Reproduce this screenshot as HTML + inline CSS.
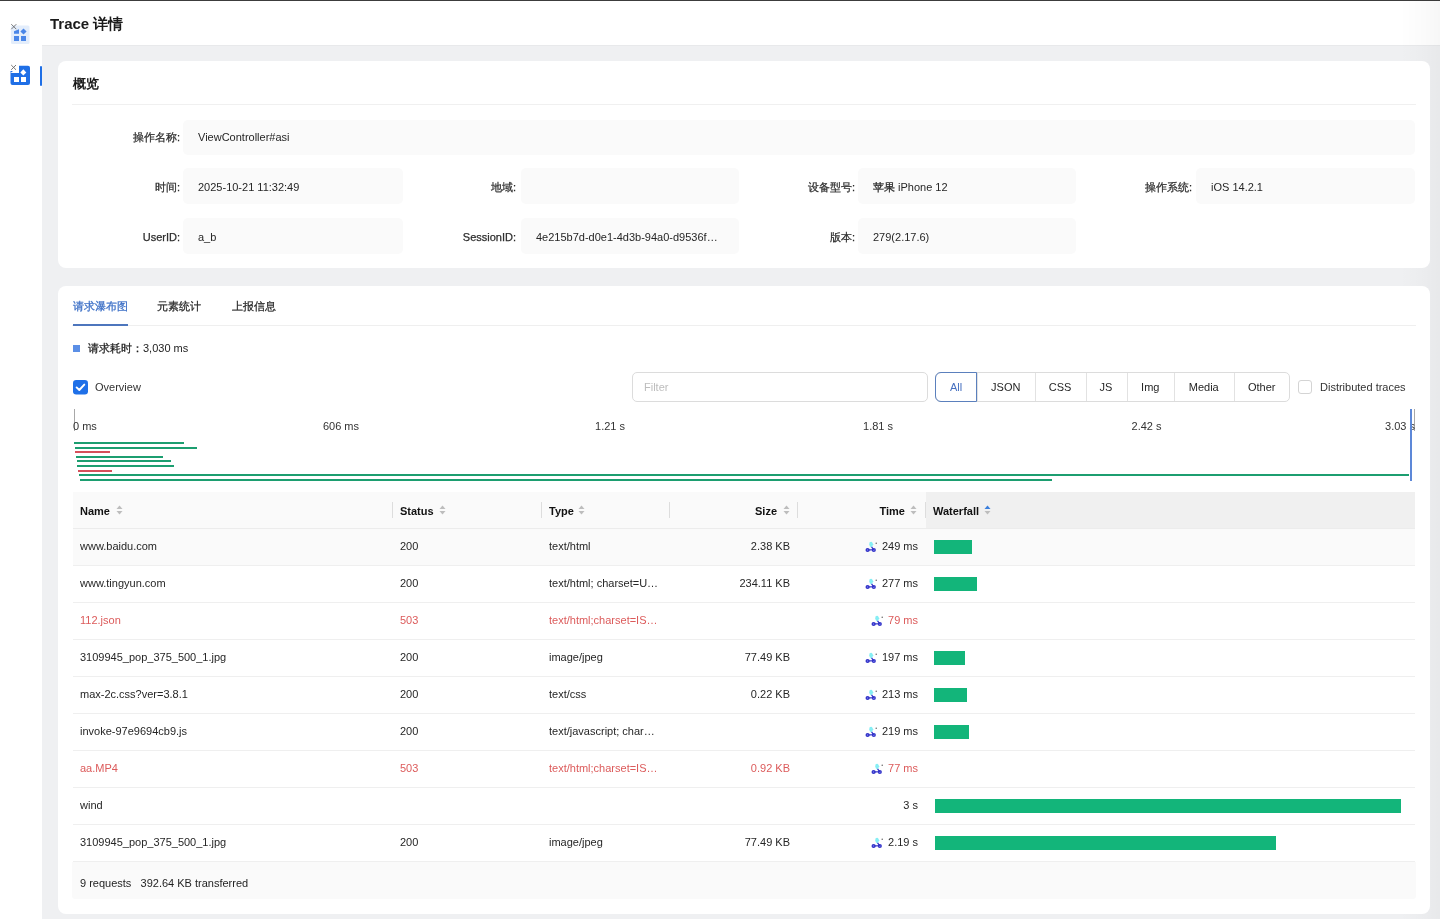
<!DOCTYPE html><html><head><meta charset="utf-8"><style>
*{box-sizing:border-box;margin:0;padding:0}
html,body{width:1440px;height:919px;overflow:hidden;background:#fff;font-family:"Liberation Sans",sans-serif;color:#262626;font-size:11px}
.a{position:absolute}
.t{position:absolute;white-space:nowrap;line-height:14px}
.card{position:absolute;background:#fff;border-radius:8px}
.lbl{position:absolute;white-space:nowrap;color:#2e2e2e;-webkit-text-stroke:0.25px #2e2e2e;text-align:right;line-height:14px}
.fb{position:absolute;background:#fafafa;border-radius:5px}
.val{position:absolute;white-space:nowrap;color:#262626;line-height:14px}
.seg{position:absolute;top:372px;height:30px;border-top:1px solid #dcdcdc;border-bottom:1px solid #dcdcdc;line-height:27px;text-align:center;color:#262626}
.hd{position:absolute;white-space:nowrap;font-weight:bold;color:#111;line-height:14px}
.sep{position:absolute;top:502px;width:1px;height:16px;background:#dddddd}
.rl{position:absolute;left:73px;width:1342px;height:1px;background:#efefef}
.cell{position:absolute;white-space:nowrap;line-height:14px;color:#262626}
.red{color:#dc5b5b}
.cj{-webkit-text-stroke:0.25px currentColor}
.wf{position:absolute;height:14px;background:#13b57a}
.ob{position:absolute;height:2px;background:#1c9e70}
.obr{position:absolute;height:2px;background:#d6505a}
</style></head><body><div style="position:absolute;left:0;top:0;width:1440px;height:919px;will-change:transform">
<div class="a" style="left:0;top:0;width:1440px;height:1px;background:#3c3c3c"></div>
<div class="a" style="left:42px;top:45px;width:1398px;height:874px;background:#eff0f2;border-top:1px solid #e8e9eb"></div>
<div class="t" style="left:50px;top:15px;font-size:15px;font-weight:bold;color:#1b1b1b;line-height:18px">Trace 详情</div>
<svg class="a" style="left:8px;top:20px" width="26" height="28" viewBox="0 0 26 28">
<rect x="3" y="5.5" width="18.5" height="18.5" rx="1.5" fill="#e3edfb"/>
<path d="M6 11.3 L11 9.2 L11 13.8 L6 13.8 Z" fill="#4a86e8"/>
<rect x="6" y="16" width="5" height="5" fill="#4a86e8"/>
<rect x="13" y="16" width="5" height="5" fill="#4a86e8"/>
<path d="M15.5 8.6 L18.6 11.6 L15.5 14.6 L12.4 11.6 Z" fill="#4a86e8"/>
<path d="M3.3 4.2 L8.3 9.2 M8.3 4.2 L3.3 9.2" stroke="#6a6a6a" stroke-width="0.9"/>
</svg>
<svg class="a" style="left:8px;top:60px" width="26" height="28" viewBox="0 0 26 28">
<path d="M11 5.8 H20 Q22 5.8 22 7.8 V23 Q22 25 20 25 H4.5 Q2.5 25 2.5 23 V13 H11 Z" fill="#1f6fe6"/>
<path d="M2.5 13 L2.5 11 L5 11 Z" fill="#1f6fe6"/>
<rect x="6" y="17" width="5" height="5" fill="#fff"/>
<rect x="13" y="17" width="5" height="5" fill="#fff"/>
<path d="M15.3 9.2 L18.3 12.4 L15.3 15.6 L12.3 12.4 Z" fill="#fff"/>
<path d="M3.2 5 L8 9.8 M8 5 L3.2 9.8" stroke="#6a6a6a" stroke-width="0.9"/>
</svg>
<div class="a" style="left:40px;top:66px;width:2px;height:20px;background:#1f6fe6;border-radius:1px"></div>
<div class="a" style="left:1400px;top:0;width:40px;height:919px;background:linear-gradient(to right,rgba(0,0,0,0),rgba(0,0,0,0.015) 60%,rgba(0,0,0,0.03))"></div>
<div class="card" style="left:58px;top:61px;width:1372px;height:207px"></div>
<div class="t" style="left:73px;top:76px;font-size:13px;font-weight:bold;color:#1a1a1a;line-height:16px">概览</div>
<div class="a" style="left:72px;top:104px;width:1344px;height:1px;background:#f0f0f0"></div>
<div class="lbl" style="right:1260px;top:130px">操作名称:</div>
<div class="fb" style="left:183px;top:120px;width:1232px;height:35px"></div>
<div class="val" style="left:198px;top:130px">ViewController#asi</div>
<div class="lbl" style="right:1260px;top:180px">时间:</div>
<div class="fb" style="left:183px;top:168px;width:220px;height:36px"></div>
<div class="val" style="left:198px;top:180px">2025-10-21 11:32:49</div>
<div class="lbl" style="right:924px;top:180px">地域:</div>
<div class="fb" style="left:521px;top:168px;width:218px;height:36px"></div>
<div class="lbl" style="right:585px;top:180px">设备型号:</div>
<div class="fb" style="left:858px;top:168px;width:218px;height:36px"></div>
<div class="val" style="left:873px;top:180px"><span class="cj">苹果</span> iPhone 12</div>
<div class="lbl" style="right:248px;top:180px">操作系统:</div>
<div class="fb" style="left:1196px;top:168px;width:219px;height:36px"></div>
<div class="val" style="left:1211px;top:180px">iOS 14.2.1</div>
<div class="lbl" style="right:1260px;top:230px">UserID:</div>
<div class="fb" style="left:183px;top:218px;width:220px;height:36px"></div>
<div class="val" style="left:198px;top:230px">a_b</div>
<div class="lbl" style="right:924px;top:230px">SessionID:</div>
<div class="fb" style="left:521px;top:218px;width:218px;height:36px"></div>
<div class="val" style="left:536px;top:230px">4e215b7d-d0e1-4d3b-94a0-d9536f…</div>
<div class="lbl" style="right:585px;top:230px">版本:</div>
<div class="fb" style="left:858px;top:218px;width:218px;height:36px"></div>
<div class="val" style="left:873px;top:230px">279(2.17.6)</div>
<div class="card" style="left:58px;top:286px;width:1372px;height:628px"></div>
<div class="t" style="left:73px;top:299px;color:#3a6ec6"><span class="cj">请求瀑布图</span></div>
<div class="t" style="left:157px;top:299px;color:#262626"><span class="cj">元素统计</span></div>
<div class="t" style="left:232px;top:299px;color:#262626"><span class="cj">上报信息</span></div>
<div class="a" style="left:72px;top:325px;width:1344px;height:1px;background:#efefef"></div>
<div class="a" style="left:73px;top:324px;width:55px;height:2px;background:#4d76bd"></div>
<div class="a" style="left:73px;top:345px;width:7px;height:7px;background:#5b8fe6"></div>
<div class="t" style="left:88px;top:341px;color:#222"><span class="cj">请求耗时：</span>3,030 ms</div>
<svg class="a" style="left:73px;top:380px" width="15" height="14.5" viewBox="0 0 15 14.5"><rect width="15" height="14.5" rx="3.2" fill="#1f70e8"/><path d="M3.6 7.4 L6.3 10 L11.3 4.6" stroke="#fff" stroke-width="1.9" fill="none" stroke-linecap="round" stroke-linejoin="round"/></svg>
<div class="t" style="left:95px;top:380px;color:#333">Overview</div>
<div class="a" style="left:632px;top:372px;width:296px;height:30px;border:1px solid #dcdcdc;border-radius:5px;background:#fff"></div>
<div class="t" style="left:644px;top:380px;color:#bdbdbd">Filter</div>
<div class="a" style="left:935px;top:372px;width:355px;height:30px;border:1px solid #dcdcdc;border-radius:5px"></div>
<div class="t" style="left:935px;top:380px;width:42px;text-align:center;color:#4670c0">All</div>
<div class="a" style="left:977px;top:373px;width:1px;height:28px;background:#e2e2e2"></div>
<div class="t" style="left:977px;top:380px;width:57.5px;text-align:center;color:#262626">JSON</div>
<div class="a" style="left:1034.5px;top:373px;width:1px;height:28px;background:#e2e2e2"></div>
<div class="t" style="left:1034.5px;top:380px;width:51.0px;text-align:center;color:#262626">CSS</div>
<div class="a" style="left:1085.5px;top:373px;width:1px;height:28px;background:#e2e2e2"></div>
<div class="t" style="left:1085.5px;top:380px;width:41.0px;text-align:center;color:#262626">JS</div>
<div class="a" style="left:1126.5px;top:373px;width:1px;height:28px;background:#e2e2e2"></div>
<div class="t" style="left:1126.5px;top:380px;width:47.5px;text-align:center;color:#262626">Img</div>
<div class="a" style="left:1174px;top:373px;width:1px;height:28px;background:#e2e2e2"></div>
<div class="t" style="left:1174px;top:380px;width:59.5px;text-align:center;color:#262626">Media</div>
<div class="a" style="left:1233.5px;top:373px;width:1px;height:28px;background:#e2e2e2"></div>
<div class="t" style="left:1233.5px;top:380px;width:56.5px;text-align:center;color:#262626">Other</div>
<div class="a" style="left:935px;top:372px;width:42px;height:30px;border:1px solid #5b80bd;border-radius:6px 0 0 6px"></div>
<div class="a" style="left:1298px;top:380px;width:14px;height:14px;border:1px solid #d4d4d4;border-radius:3px;background:#fff"></div>
<div class="t" style="left:1320px;top:380px;color:#333">Distributed traces</div>
<div class="a" style="left:74px;top:409px;width:1px;height:22px;background:#a8a8a8"></div>
<div class="a" style="left:1414px;top:409px;width:1px;height:22px;background:#a8a8a8"></div>
<div class="t" style="left:73px;top:419px;color:#333">0 ms</div>
<div class="t" style="left:291px;width:100px;text-align:center;top:419px;color:#333">606 ms</div>
<div class="t" style="left:560px;width:100px;text-align:center;top:419px;color:#333">1.21 s</div>
<div class="t" style="left:828px;width:100px;text-align:center;top:419px;color:#333">1.81 s</div>
<div class="t" style="left:1096.5px;width:100px;text-align:center;top:419px;color:#333">2.42 s</div>
<div class="t" style="right:25px;top:419px;color:#333">3.03 s</div>
<div class="ob" style="left:74px;top:442.00px;width:110px"></div>
<div class="ob" style="left:74.5px;top:446.62px;width:122.5px"></div>
<div class="obr" style="left:75px;top:451.24px;width:35px"></div>
<div class="ob" style="left:76px;top:455.86px;width:87px"></div>
<div class="ob" style="left:76.5px;top:460.48px;width:94.5px"></div>
<div class="ob" style="left:77px;top:465.10px;width:97px"></div>
<div class="obr" style="left:78px;top:469.72px;width:34px"></div>
<div class="ob" style="left:78.5px;top:474.34px;width:1330.5px"></div>
<div class="ob" style="left:79.5px;top:478.96px;width:972.5px"></div>
<div class="a" style="left:1410px;top:409px;width:2px;height:72px;background:#5d88d8"></div>
<div class="a" style="left:73px;top:492px;width:1342px;height:36px;background:#fafafa"></div>
<div class="a" style="left:926px;top:492px;width:489px;height:36px;background:#f0f0f0"></div>
<div class="sep" style="left:392px"></div>
<div class="sep" style="left:541px"></div>
<div class="sep" style="left:669px"></div>
<div class="sep" style="left:797px"></div>
<div class="sep" style="left:925px"></div>
<div class="hd" style="left:80px;top:504px">Name</div>
<svg class="a" style="left:115.5px;top:504px" width="7" height="12" viewBox="0 0 7 12"><path d="M0.5 5 L3.5 1.5 L6.5 5 Z" fill="#bdbdbd"/><path d="M0.5 7 L3.5 10.5 L6.5 7 Z" fill="#bdbdbd"/></svg>
<div class="hd" style="left:400px;top:504px">Status</div>
<svg class="a" style="left:438.5px;top:504px" width="7" height="12" viewBox="0 0 7 12"><path d="M0.5 5 L3.5 1.5 L6.5 5 Z" fill="#bdbdbd"/><path d="M0.5 7 L3.5 10.5 L6.5 7 Z" fill="#bdbdbd"/></svg>
<div class="hd" style="left:549px;top:504px">Type</div>
<svg class="a" style="left:578px;top:504px" width="7" height="12" viewBox="0 0 7 12"><path d="M0.5 5 L3.5 1.5 L6.5 5 Z" fill="#bdbdbd"/><path d="M0.5 7 L3.5 10.5 L6.5 7 Z" fill="#bdbdbd"/></svg>
<div class="hd" style="right:663px;top:504px">Size</div>
<svg class="a" style="left:782.5px;top:504px" width="7" height="12" viewBox="0 0 7 12"><path d="M0.5 5 L3.5 1.5 L6.5 5 Z" fill="#bdbdbd"/><path d="M0.5 7 L3.5 10.5 L6.5 7 Z" fill="#bdbdbd"/></svg>
<div class="hd" style="right:535px;top:504px">Time</div>
<svg class="a" style="left:910px;top:504px" width="7" height="12" viewBox="0 0 7 12"><path d="M0.5 5 L3.5 1.5 L6.5 5 Z" fill="#bdbdbd"/><path d="M0.5 7 L3.5 10.5 L6.5 7 Z" fill="#bdbdbd"/></svg>
<div class="hd" style="left:933px;top:504px">Waterfall</div>
<svg class="a" style="left:984px;top:504px" width="7" height="12" viewBox="0 0 7 12"><path d="M0.5 5 L3.5 1.5 L6.5 5 Z" fill="#3b7fdc"/><path d="M0.5 7 L3.5 10.5 L6.5 7 Z" fill="#bdbdbd"/></svg>
<div class="a" style="left:73px;top:528px;width:1342px;height:1px;background:#ececec"></div>
<div class="a" style="left:73px;top:529px;width:1342px;height:36px;background:#fafafa"></div>
<div class="rl" style="top:565px"></div>
<div class="cell" style="left:80px;top:539px">www.baidu.com</div>
<div class="cell" style="left:400px;top:539px">200</div>
<div class="cell" style="left:549px;top:539px">text/html</div>
<div class="cell" style="right:650px;top:539px">2.38 KB</div>
<div class="cell" style="right:522px;top:539px"><span style="display:inline-block;vertical-align:-3px;margin-right:4px;width:13px;height:12px"><svg width="13" height="12" viewBox="0 0 13 12"><path d="M4.6 1.2 Q5.8 0.4 7 1 L8.2 3.2 Q7.6 5.6 6 6.4 Q4.6 5.2 4.2 3.4 Z" fill="#86eef4"/><circle cx="2.6" cy="9" r="2.1" fill="#3434c8"/><circle cx="8.8" cy="9" r="2.1" fill="#3434c8"/><circle cx="2.6" cy="9" r="0.7" fill="#9aa0ff"/><circle cx="8.8" cy="9" r="0.7" fill="#9aa0ff"/><path d="M2.6 9 L7.6 8.6 M8.8 9 L6.6 5.8" stroke="#3434c8" stroke-width="1.3" fill="none"/><circle cx="11.2" cy="2.2" r="0.7" fill="#555"/></svg></span>249 ms</div>
<div class="wf" style="left:933.5px;top:540px;width:38.5px"></div>
<div class="rl" style="top:602px"></div>
<div class="cell" style="left:80px;top:576px">www.tingyun.com</div>
<div class="cell" style="left:400px;top:576px">200</div>
<div class="cell" style="left:549px;top:576px">text/html; charset=U…</div>
<div class="cell" style="right:650px;top:576px">234.11 KB</div>
<div class="cell" style="right:522px;top:576px"><span style="display:inline-block;vertical-align:-3px;margin-right:4px;width:13px;height:12px"><svg width="13" height="12" viewBox="0 0 13 12"><path d="M4.6 1.2 Q5.8 0.4 7 1 L8.2 3.2 Q7.6 5.6 6 6.4 Q4.6 5.2 4.2 3.4 Z" fill="#86eef4"/><circle cx="2.6" cy="9" r="2.1" fill="#3434c8"/><circle cx="8.8" cy="9" r="2.1" fill="#3434c8"/><circle cx="2.6" cy="9" r="0.7" fill="#9aa0ff"/><circle cx="8.8" cy="9" r="0.7" fill="#9aa0ff"/><path d="M2.6 9 L7.6 8.6 M8.8 9 L6.6 5.8" stroke="#3434c8" stroke-width="1.3" fill="none"/><circle cx="11.2" cy="2.2" r="0.7" fill="#555"/></svg></span>277 ms</div>
<div class="wf" style="left:933.5px;top:577px;width:43.0px"></div>
<div class="rl" style="top:639px"></div>
<div class="cell red" style="left:80px;top:613px">112.json</div>
<div class="cell red" style="left:400px;top:613px">503</div>
<div class="cell red" style="left:549px;top:613px">text/html;charset=IS…</div>
<div class="cell red" style="right:522px;top:613px"><span style="display:inline-block;vertical-align:-3px;margin-right:4px;width:13px;height:12px"><svg width="13" height="12" viewBox="0 0 13 12"><path d="M4.6 1.2 Q5.8 0.4 7 1 L8.2 3.2 Q7.6 5.6 6 6.4 Q4.6 5.2 4.2 3.4 Z" fill="#86eef4"/><circle cx="2.6" cy="9" r="2.1" fill="#3434c8"/><circle cx="8.8" cy="9" r="2.1" fill="#3434c8"/><circle cx="2.6" cy="9" r="0.7" fill="#9aa0ff"/><circle cx="8.8" cy="9" r="0.7" fill="#9aa0ff"/><path d="M2.6 9 L7.6 8.6 M8.8 9 L6.6 5.8" stroke="#3434c8" stroke-width="1.3" fill="none"/><circle cx="11.2" cy="2.2" r="0.7" fill="#555"/></svg></span>79 ms</div>
<div class="rl" style="top:676px"></div>
<div class="cell" style="left:80px;top:650px">3109945_pop_375_500_1.jpg</div>
<div class="cell" style="left:400px;top:650px">200</div>
<div class="cell" style="left:549px;top:650px">image/jpeg</div>
<div class="cell" style="right:650px;top:650px">77.49 KB</div>
<div class="cell" style="right:522px;top:650px"><span style="display:inline-block;vertical-align:-3px;margin-right:4px;width:13px;height:12px"><svg width="13" height="12" viewBox="0 0 13 12"><path d="M4.6 1.2 Q5.8 0.4 7 1 L8.2 3.2 Q7.6 5.6 6 6.4 Q4.6 5.2 4.2 3.4 Z" fill="#86eef4"/><circle cx="2.6" cy="9" r="2.1" fill="#3434c8"/><circle cx="8.8" cy="9" r="2.1" fill="#3434c8"/><circle cx="2.6" cy="9" r="0.7" fill="#9aa0ff"/><circle cx="8.8" cy="9" r="0.7" fill="#9aa0ff"/><path d="M2.6 9 L7.6 8.6 M8.8 9 L6.6 5.8" stroke="#3434c8" stroke-width="1.3" fill="none"/><circle cx="11.2" cy="2.2" r="0.7" fill="#555"/></svg></span>197 ms</div>
<div class="wf" style="left:934px;top:651px;width:30.5px"></div>
<div class="rl" style="top:713px"></div>
<div class="cell" style="left:80px;top:687px">max-2c.css?ver=3.8.1</div>
<div class="cell" style="left:400px;top:687px">200</div>
<div class="cell" style="left:549px;top:687px">text/css</div>
<div class="cell" style="right:650px;top:687px">0.22 KB</div>
<div class="cell" style="right:522px;top:687px"><span style="display:inline-block;vertical-align:-3px;margin-right:4px;width:13px;height:12px"><svg width="13" height="12" viewBox="0 0 13 12"><path d="M4.6 1.2 Q5.8 0.4 7 1 L8.2 3.2 Q7.6 5.6 6 6.4 Q4.6 5.2 4.2 3.4 Z" fill="#86eef4"/><circle cx="2.6" cy="9" r="2.1" fill="#3434c8"/><circle cx="8.8" cy="9" r="2.1" fill="#3434c8"/><circle cx="2.6" cy="9" r="0.7" fill="#9aa0ff"/><circle cx="8.8" cy="9" r="0.7" fill="#9aa0ff"/><path d="M2.6 9 L7.6 8.6 M8.8 9 L6.6 5.8" stroke="#3434c8" stroke-width="1.3" fill="none"/><circle cx="11.2" cy="2.2" r="0.7" fill="#555"/></svg></span>213 ms</div>
<div class="wf" style="left:934px;top:688px;width:33px"></div>
<div class="rl" style="top:750px"></div>
<div class="cell" style="left:80px;top:724px">invoke-97e9694cb9.js</div>
<div class="cell" style="left:400px;top:724px">200</div>
<div class="cell" style="left:549px;top:724px">text/javascript; char…</div>
<div class="cell" style="right:522px;top:724px"><span style="display:inline-block;vertical-align:-3px;margin-right:4px;width:13px;height:12px"><svg width="13" height="12" viewBox="0 0 13 12"><path d="M4.6 1.2 Q5.8 0.4 7 1 L8.2 3.2 Q7.6 5.6 6 6.4 Q4.6 5.2 4.2 3.4 Z" fill="#86eef4"/><circle cx="2.6" cy="9" r="2.1" fill="#3434c8"/><circle cx="8.8" cy="9" r="2.1" fill="#3434c8"/><circle cx="2.6" cy="9" r="0.7" fill="#9aa0ff"/><circle cx="8.8" cy="9" r="0.7" fill="#9aa0ff"/><path d="M2.6 9 L7.6 8.6 M8.8 9 L6.6 5.8" stroke="#3434c8" stroke-width="1.3" fill="none"/><circle cx="11.2" cy="2.2" r="0.7" fill="#555"/></svg></span>219 ms</div>
<div class="wf" style="left:934px;top:725px;width:34.5px"></div>
<div class="rl" style="top:787px"></div>
<div class="cell red" style="left:80px;top:761px">aa.MP4</div>
<div class="cell red" style="left:400px;top:761px">503</div>
<div class="cell red" style="left:549px;top:761px">text/html;charset=IS…</div>
<div class="cell red" style="right:650px;top:761px">0.92 KB</div>
<div class="cell red" style="right:522px;top:761px"><span style="display:inline-block;vertical-align:-3px;margin-right:4px;width:13px;height:12px"><svg width="13" height="12" viewBox="0 0 13 12"><path d="M4.6 1.2 Q5.8 0.4 7 1 L8.2 3.2 Q7.6 5.6 6 6.4 Q4.6 5.2 4.2 3.4 Z" fill="#86eef4"/><circle cx="2.6" cy="9" r="2.1" fill="#3434c8"/><circle cx="8.8" cy="9" r="2.1" fill="#3434c8"/><circle cx="2.6" cy="9" r="0.7" fill="#9aa0ff"/><circle cx="8.8" cy="9" r="0.7" fill="#9aa0ff"/><path d="M2.6 9 L7.6 8.6 M8.8 9 L6.6 5.8" stroke="#3434c8" stroke-width="1.3" fill="none"/><circle cx="11.2" cy="2.2" r="0.7" fill="#555"/></svg></span>77 ms</div>
<div class="rl" style="top:824px"></div>
<div class="cell" style="left:80px;top:798px">wind</div>
<div class="cell" style="right:522px;top:798px">3 s</div>
<div class="wf" style="left:935px;top:799px;width:466px"></div>
<div class="rl" style="top:861px"></div>
<div class="cell" style="left:80px;top:835px">3109945_pop_375_500_1.jpg</div>
<div class="cell" style="left:400px;top:835px">200</div>
<div class="cell" style="left:549px;top:835px">image/jpeg</div>
<div class="cell" style="right:650px;top:835px">77.49 KB</div>
<div class="cell" style="right:522px;top:835px"><span style="display:inline-block;vertical-align:-3px;margin-right:4px;width:13px;height:12px"><svg width="13" height="12" viewBox="0 0 13 12"><path d="M4.6 1.2 Q5.8 0.4 7 1 L8.2 3.2 Q7.6 5.6 6 6.4 Q4.6 5.2 4.2 3.4 Z" fill="#86eef4"/><circle cx="2.6" cy="9" r="2.1" fill="#3434c8"/><circle cx="8.8" cy="9" r="2.1" fill="#3434c8"/><circle cx="2.6" cy="9" r="0.7" fill="#9aa0ff"/><circle cx="8.8" cy="9" r="0.7" fill="#9aa0ff"/><path d="M2.6 9 L7.6 8.6 M8.8 9 L6.6 5.8" stroke="#3434c8" stroke-width="1.3" fill="none"/><circle cx="11.2" cy="2.2" r="0.7" fill="#555"/></svg></span>2.19 s</div>
<div class="wf" style="left:935px;top:836px;width:341px"></div>
<div class="a" style="left:72px;top:862px;width:1344px;height:37px;background:#fafafa;border-radius:0 0 3px 3px"></div>
<div class="t" style="left:80px;top:876px;color:#1f1f1f">9 requests&nbsp;&nbsp; 392.64 KB transferred</div>
</div></body></html>
